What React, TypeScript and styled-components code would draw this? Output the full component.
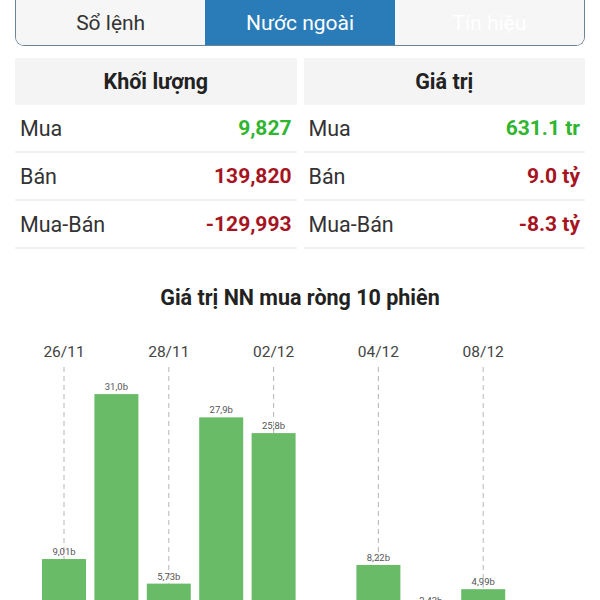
import React from 'react'
import styled, { createGlobalStyle } from 'styled-components'

const Global = createGlobalStyle`
  body {
    margin: 0;
    background: #fff;
    font-family: Roboto, "Noto Sans", sans-serif;
    color: #333;
  }
`

const Page = styled.div`
  width: 600px;
  height: 600px;
  overflow: hidden;
  background: #fff;
`

const TabBar = styled.div`
  display: flex;
  height: 45px;
  margin: 0 15px;
  border: 1.5px solid #6a8598;
  border-top: none;
  border-radius: 0 0 9px 9px;
  overflow: hidden;
  background: #f6f6f6;
`

const Tab = styled.div<{ $active?: boolean; $muted?: boolean }>`
  flex: 1;
  display: flex;
  align-items: center;
  justify-content: center;
  font-size: 21px;
  background: ${p => (p.$active ? '#2a7cb9' : '#f6f6f6')};
  color: ${p => (p.$active || p.$muted ? '#fff' : '#333')};
`

const Tables = styled.div`
  display: flex;
  gap: 7px;
  padding: 12px 15px 0;
`

const Table = styled.div`
  flex: 1;
  display: flex;
  flex-direction: column;
`

const Head = styled.div`
  height: 47px;
  display: flex;
  align-items: center;
  justify-content: center;
  background: #f4f4f4;
  font-size: 21.5px;
  font-weight: 700;
  color: #222;
`

const Row = styled.div`
  height: 46px;
  display: flex;
  align-items: center;
  justify-content: space-between;
  padding: 0 5px;
  border-bottom: 2px solid #f2f2f2;
`

const Label = styled.span`
  font-size: 21.5px;
  color: #333;
`

const Value = styled.span<{ $up?: boolean }>`
  font-weight: 700;
  font-size: 21px;
  color: ${p => (p.$up ? '#2fb52f' : '#a5141f')};
`

const Title = styled.div`
  margin-top: 36px;
  height: 26px;
  line-height: 26px;
  text-align: center;
  font-size: 21.5px;
  font-weight: 700;
  color: #222;
`

const Chart = styled.svg`
  display: block;
`

const bars = [9.01, 31.0, 5.73, 27.9, 25.8, -3.2, 8.22, 2.43, 4.99, -1.6]
const dates = ['26/11', '28/11', '02/12', '04/12', '08/12']

const fmt = (v: number) =>
  (Math.abs(v) < 10 ? v.toFixed(2) : v.toFixed(1)).replace('.', ',') + 'b'

function NetChart() {
  const base = 315.6
  const scale = 7.5
  const x0 = 42
  const step = 52.4
  const w = 44
  return (
    <Chart width={600} height={290}>
      {bars.map((v, i) => {
        const x = x0 + i * step
        const top = base - Math.max(v, 0) * scale
        const h = Math.abs(v) * scale
        return (
          <g key={i}>
            {i % 2 === 0 && (
              <>
                <text x={x + w / 2} y={46} textAnchor="middle" fontSize={15.5} fill="#444">
                  {dates[i / 2]}
                </text>
                <line
                  x1={x + w / 2}
                  x2={x + w / 2}
                  y1={56}
                  y2={top}
                  stroke="#b5b5b5"
                  strokeWidth={1}
                  strokeDasharray="5 4"
                />
              </>
            )}
            <rect x={x} y={v >= 0 ? top : base} width={w} height={h} fill="#6abb68" />
            {v > 0 && (
              <text x={x + w / 2} y={top - 4} textAnchor="middle" fontSize={9.5} fill="#555">
                {fmt(v)}
              </text>
            )}
          </g>
        )
      })}
    </Chart>
  )
}

const volume = [
  { label: 'Mua', value: '9,827', up: true },
  { label: 'Bán', value: '139,820', up: false },
  { label: 'Mua-Bán', value: '-129,993', up: false },
]

const worth = [
  { label: 'Mua', value: '631.1 tr', up: true },
  { label: 'Bán', value: '9.0 tỷ', up: false },
  { label: 'Mua-Bán', value: '-8.3 tỷ', up: false },
]

export default function App() {
  return (
    <Page>
      <Global />
      <TabBar>
        <Tab>Sổ lệnh</Tab>
        <Tab $active>Nước ngoài</Tab>
        <Tab $muted>Tín hiệu</Tab>
      </TabBar>
      <Tables>
        <Table>
          <Head>Khối lượng</Head>
          {volume.map(r => (
            <Row key={r.label}>
              <Label>{r.label}</Label>
              <Value $up={r.up}>{r.value}</Value>
            </Row>
          ))}
        </Table>
        <Table>
          <Head>Giá trị</Head>
          {worth.map(r => (
            <Row key={r.label}>
              <Label>{r.label}</Label>
              <Value $up={r.up}>{r.value}</Value>
            </Row>
          ))}
        </Table>
      </Tables>
      <Title>Giá trị NN mua ròng 10 phiên</Title>
      <NetChart />
    </Page>
  )
}
